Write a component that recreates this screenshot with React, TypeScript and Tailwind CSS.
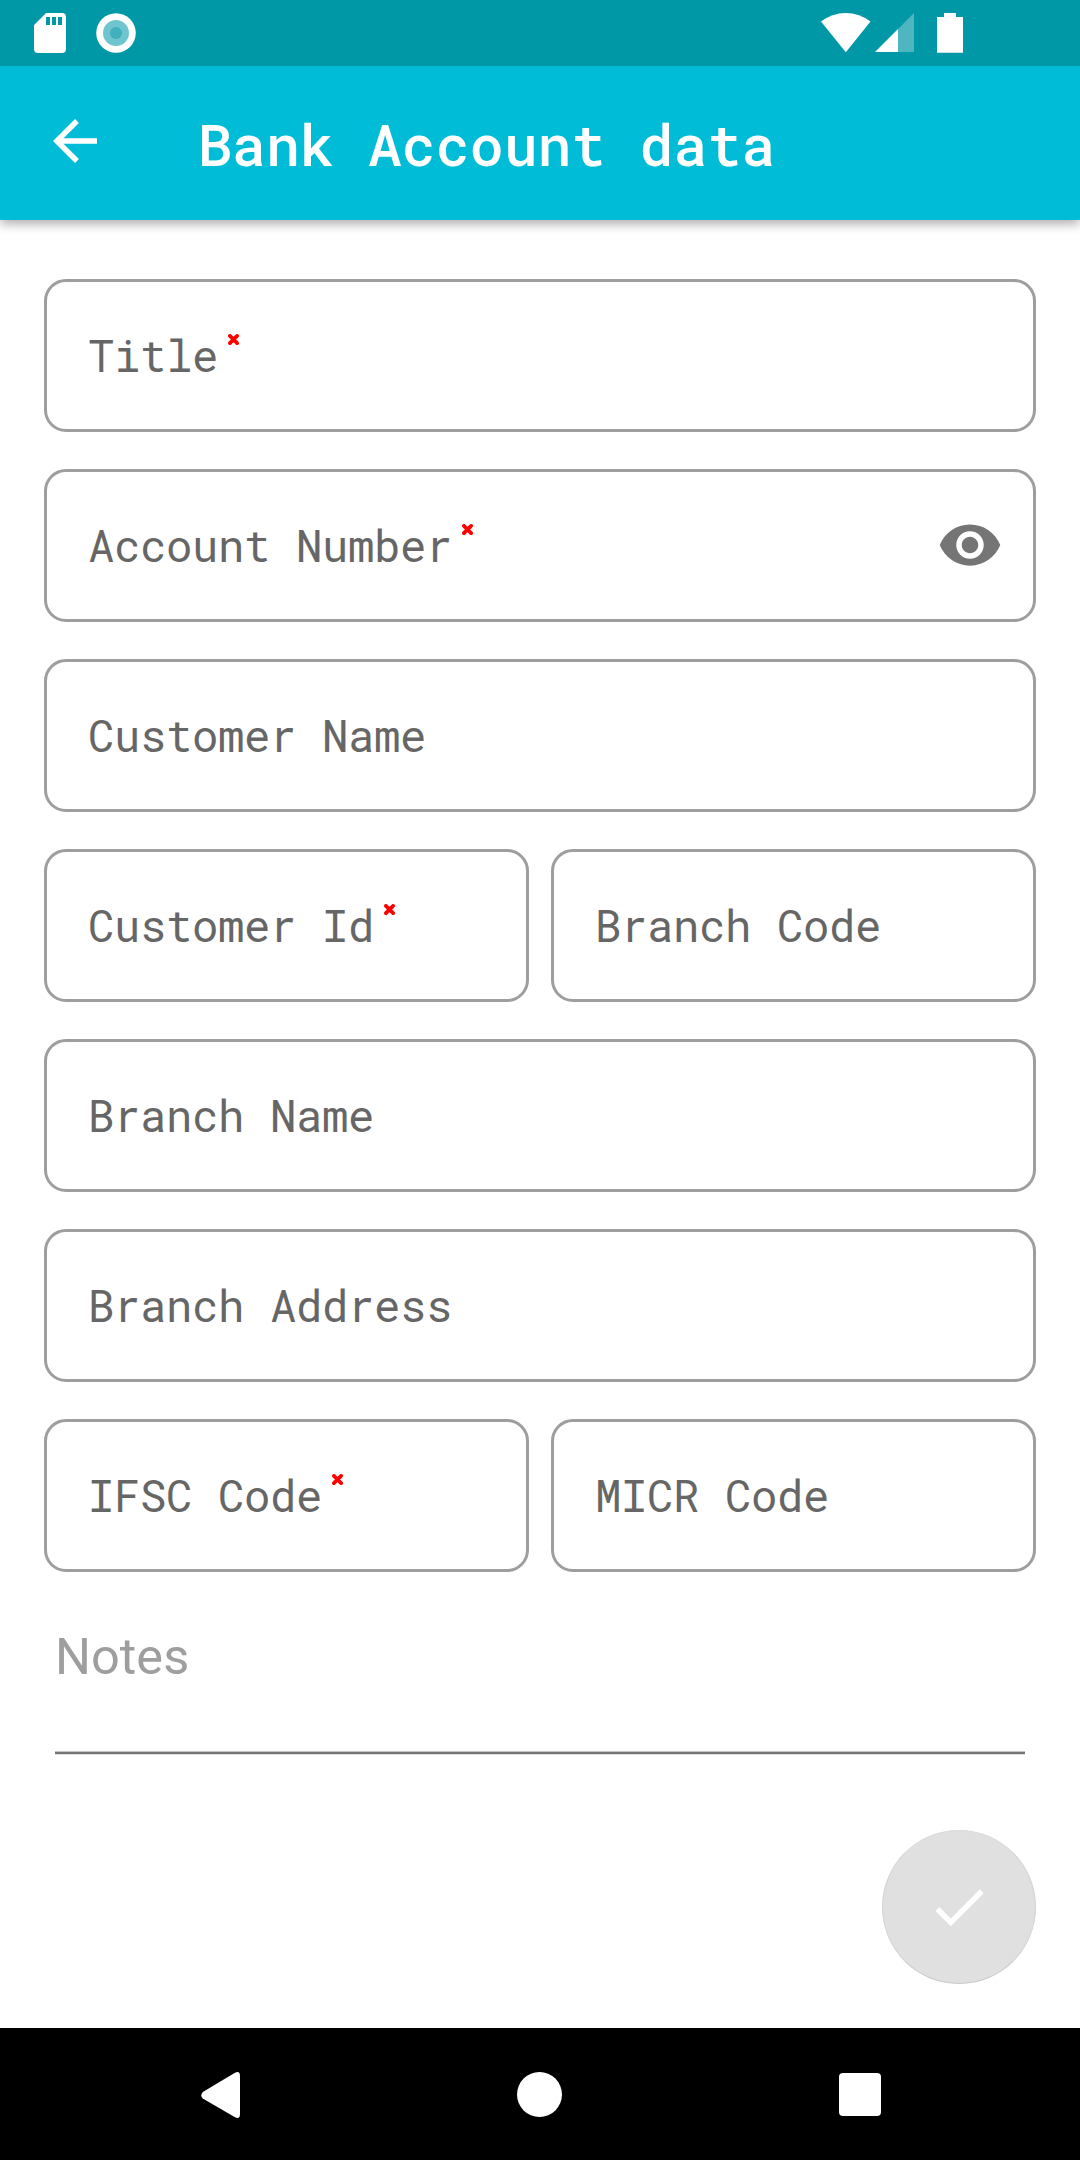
type FieldProps = {
  label: string;
  required?: boolean;
  revealable?: boolean;
};

function RequiredMark() {
  return (
    <svg className="mt-[-31px] ml-[9.5px] h-[11px] w-[11px]" viewBox="0 0 11 11" aria-label="required">
      <path d="M1.9 1.9 9.1 9.1M9.1 1.9 1.9 9.1" stroke="#f00" strokeWidth="3.7" strokeLinecap="round" />
    </svg>
  );
}

function EyeIcon() {
  return (
    <svg className="h-[66px] w-[66px]" viewBox="0 0 24 24" fill="#757575">
      <path d="M12 4.5C7 4.5 2.73 7.61 1 12c1.73 4.39 6 7.5 11 7.5s9.27-3.11 11-7.5c-1.73-4.39-6-7.5-11-7.5zM12 17c-2.76 0-5-2.24-5-5s2.24-5 5-5 5 2.24 5 5-2.24 5-5 5zm0-8c-1.66 0-3 1.34-3 3s1.34 3 3 3 3-1.34 3-3-1.34-3-3-3z" />
    </svg>
  );
}

function Field({ label, required, revealable }: FieldProps) {
  return (
    <div className="flex h-[153px] min-w-0 flex-1 items-center rounded-[22px] border-3 border-[#9e9e9e] pr-[30px] pb-[2px] pl-[41px]">
      <span className="text-[44px] leading-none tracking-[-0.4px] whitespace-pre text-[#666]">{label}</span>
      {required && <RequiredMark />}
      {revealable && (
        <button className="ml-auto">
          <EyeIcon />
        </button>
      )}
    </div>
  );
}

const rows: FieldProps[][] = [
  [{ label: "Title", required: true }],
  [{ label: "Account Number", required: true, revealable: true }],
  [{ label: "Customer Name" }],
  [{ label: "Customer Id", required: true }, { label: "Branch Code" }],
  [{ label: "Branch Name" }],
  [{ label: "Branch Address" }],
  [{ label: "IFSC Code", required: true }, { label: "MICR Code" }],
];

function StatusBar() {
  return (
    <div className="relative z-10 flex h-[66px] items-center bg-[#0097a7] pr-[117px] pl-[34px]">
      <svg className="h-10 w-8" viewBox="0 0 32 40">
        <path
          fill="#fff"
          fillRule="evenodd"
          d="M12 0H28Q32 0 32 4V36Q32 40 28 40H4Q0 40 0 36V12ZM12 4V12H16V4ZM18 4V12H22V4ZM24 4V12H28V4Z"
        />
      </svg>
      <svg className="ml-[30px] h-10 w-10" viewBox="0 0 40 40">
        <circle cx="20" cy="20" r="19.8" fill="#fff" />
        <circle cx="20" cy="20" r="13" fill="#6fc5ce" />
        <circle cx="20" cy="20" r="6" fill="#40b0bc" />
      </svg>
      <svg className="ml-auto h-10 w-[50px]" viewBox="0 0 50 40">
        <path fill="#fff" d="M0 8.6Q11 0 24.8 0Q38.5 0 49.5 8.6L24.8 39.2Z" />
      </svg>
      <svg className="ml-1 h-10 w-[39px]" viewBox="0 0 39 40">
        <path fill="#fff" fillOpacity="0.3" d="M23 16 39 0V39H23Z" />
        <path fill="#fff" d="M0 39 23 16V39Z" />
      </svg>
      <svg className="ml-[23px] h-10 w-[26px]" viewBox="0 0 26 40">
        <path fill="#fff" d="M7 0H19V4H26V39.8H0V4H7Z" />
      </svg>
    </div>
  );
}

function AppBar() {
  return (
    <header className="relative flex h-[154px] items-center bg-[#00bcd7] pl-[42px] shadow-[0_4px_10px_rgba(0,0,0,0.32)]">
      <svg className="-mt-1 h-[66px] w-[66px]" viewBox="0 0 24 24" fill="#fff">
        <path d="M20 11H7.83l5.59-5.59L12 4l-8 8 8 8 1.41-1.41L7.83 13H20v-2z" />
      </svg>
      <h1 className="mt-[2px] ml-[90px] text-[56.6px] leading-none font-medium whitespace-pre text-white">
        Bank Account data
      </h1>
    </header>
  );
}

function NavigationBar() {
  return (
    <nav className="flex h-[132px] items-center bg-black pt-px pr-[199px] pl-[201px]">
      <svg className="h-[46px] w-[39px]" viewBox="0 0 39 46" fill="#fff">
        <path d="M34 .8Q39-1.5 39 4V42Q39 47.5 34 45.2L1.8 26.5Q-1.3 23.5 1.8 20Z" />
      </svg>
      <div className="ml-[277px] h-[45px] w-[45px] rounded-full bg-white" />
      <div className="ml-auto h-[43px] w-[42px] rounded-[4px] bg-white" />
    </nav>
  );
}

export default function App() {
  return (
    <div className='flex h-[2160px] w-[1080px] flex-col overflow-hidden bg-white font-["Roboto_Mono","Liberation_Mono",monospace]'>
      <StatusBar />
      <AppBar />
      <main className="flex flex-1 flex-col px-11 pt-[59px]">
        <div className="flex flex-col gap-[37px]">
          {rows.map((row) => (
            <div key={row[0].label} className="flex gap-[22px]">
              {row.map((field) => (
                <Field key={field.label} {...field} />
              ))}
            </div>
          ))}
        </div>
        <div className='mx-[11px] mt-[50px] flex h-[133px] flex-col justify-between font-["Roboto",sans-serif]'>
          <span className="text-[50.5px] leading-[69px] text-[#9e9e9e]">Notes</span>
          <div className="h-1 border-y border-t-[#c4c4c4] border-b-[#dcdcdc] bg-[#757575]" />
        </div>
        <button className="mt-[75px] flex h-[154px] w-[154px] items-center justify-center self-end rounded-full border border-t-[#dadada] border-r-[#d3d3d3] border-b-[#c9c9c9] border-l-[#d3d3d3] bg-[#e0e0e0]">
          <svg className="h-[66px] w-[66px]" viewBox="0 0 24 24" fill="#fff">
            <path d="M9 16.17 4.83 12l-1.42 1.41L9 19 21 7l-1.41-1.41z" />
          </svg>
        </button>
      </main>
      <NavigationBar />
    </div>
  );
}
